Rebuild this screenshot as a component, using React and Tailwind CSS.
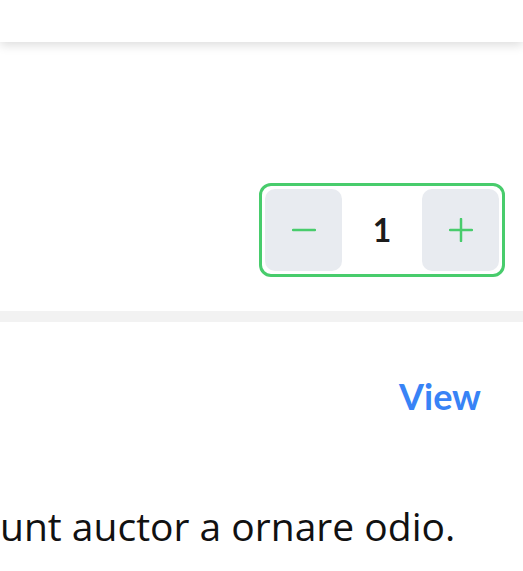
import { useState } from 'react';

const Stepper = () => {
  const [qty, setQty] = useState(1);

  return (
    <div className="flex h-[94px] w-[246px] items-center justify-between rounded-[12px] border-[3px] border-[#48cc6c] bg-white p-[3px]">
      <button
        onClick={() => setQty((q) => Math.max(1, q - 1))}
        className="flex h-full w-[77px] items-center justify-center rounded-[10px] bg-[#e8ebf0]"
      >
        <svg width="24" height="24" viewBox="0 0 24 24" fill="none" stroke="#48cc6c" strokeWidth="2.5" strokeLinecap="round">
          <path d="M1 12h22" />
        </svg>
      </button>
      <span className="font-['Lato',sans-serif] text-[32px] font-bold text-[#1c1c1c]">{qty}</span>
      <button
        onClick={() => setQty((q) => q + 1)}
        className="flex h-full w-[77px] items-center justify-center rounded-[10px] bg-[#e8ebf0]"
      >
        <svg width="24" height="24" viewBox="0 0 24 24" fill="none" stroke="#48cc6c" strokeWidth="2.5" strokeLinecap="round">
          <path d="M1 12h22M12 1v22" />
        </svg>
      </button>
    </div>
  );
};

const App = () => {
  return (
    <div className="h-[571px] w-full overflow-hidden bg-white font-['Open_Sans',sans-serif]">
      <div className="relative z-10 h-[42px] bg-white shadow-[0_3px_10px_rgba(0,0,0,0.14)]" />

      <div className="flex justify-end pr-[18px] pt-[141px]">
        <Stepper />
      </div>

      <div className="mt-[34px] h-[11px] bg-[#f2f2f2]" />

      <div className="flex justify-end pr-[42px] pt-[56px]">
        <a href="#" className="font-['Lato',sans-serif] text-[36px] font-bold leading-none text-[#3883f6]">View</a>
      </div>

      <div className="mt-[87px] whitespace-nowrap text-[39px] leading-[50px] text-[#111]">
        <p>unt auctor a ornare odio.</p>
        <p className="mt-[10px]">varius nunc massa ut ante id dui lit.</p>
      </div>
    </div>
  );
};

export default App;
